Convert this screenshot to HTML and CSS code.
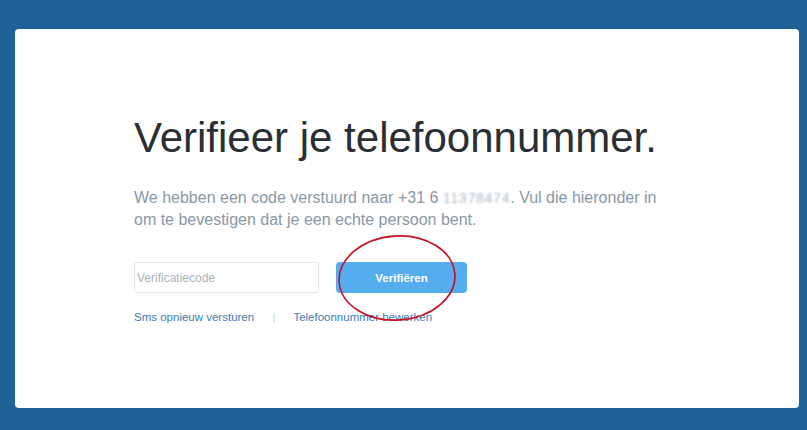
FILE: index.html
```html
<!DOCTYPE html>
<html lang="nl">
<head>
    <meta charset="UTF-8">
    <meta name="viewport" content="width=device-width, initial-scale=1.0">
    <title>Verifieer je telefoonnummer</title>
    <link rel="stylesheet" href="styles.css">
</head>
<body>

    <div class="card">
        <h1>Verifieer je telefoonnummer.</h1>

        <p class="intro">
            We hebben een code verstuurd naar +31 6 <span class="blurred">11378474</span>. Vul die hieronder in<br>
            om te bevestigen dat je een echte persoon bent.
        </p>

        <div class="form-row">
            <input type="text" class="code-input" placeholder="Verificatiecode">
            <div class="btn-wrap">
                <button class="verify-btn">Verifiëren</button>
                <svg class="circle-mark" width="124" height="92" viewBox="0 0 124 92">
                    <ellipse cx="62" cy="46" rx="58" ry="42" fill="none" stroke="#c8101e" stroke-width="1.6" transform="rotate(-4 62 46)"/>
                </svg>
            </div>
        </div>

        <div class="links">
            <a href="#">Sms opnieuw versturen</a>
            <span class="sep">|</span>
            <a href="#">Telefoonnummer bewerken</a>
        </div>
    </div>

</body>
</html>
```

FILE: styles.css
```css
body {
    margin: 0;
    background-color: #1f6298;
    font-family: "Liberation Sans", Arial, sans-serif;
    padding: 29px 8px 22px 15px;
}
.card {
    background: white;
    border-radius: 4px;
    height: 379px;
    box-sizing: border-box;
    padding: 83px 0 0 119px;
}
h1 {
    margin: 0;
    font-size: 42px;
    font-weight: normal;
    line-height: 52px;
    color: #292f33;
}
.intro {
    margin: 23px 0 0;
    font-size: 16px;
    line-height: 22px;
    color: #8899a6;
}
.blurred {
    color: #b4bcc3;
    filter: blur(1px);
    font-size: 14.5px;
    letter-spacing: 0.5px;
}
.form-row {
    display: flex;
    align-items: center;
    margin-top: 31px;
}
.code-input {
    width: 185px;
    height: 31px;
    box-sizing: border-box;
    border: 1px solid #e1e8ed;
    border-radius: 3px;
    padding: 0 2px;
    font-family: inherit;
    font-size: 12px;
    color: #292f33;
}
.code-input::placeholder {
    color: #a9b4bc;
}
.btn-wrap {
    position: relative;
    margin-left: 17px;
}
.verify-btn {
    width: 131px;
    height: 31px;
    border: none;
    border-radius: 4px;
    background-color: #55acee;
    color: white;
    font-family: inherit;
    font-weight: bold;
    font-size: 11.5px;
    cursor: pointer;
}
.circle-mark {
    position: absolute;
    left: -1px;
    top: -30px;
    pointer-events: none;
}
.links {
    margin-top: 18px;
    font-size: 11.5px;
}
.links a {
    color: #3b7bb5;
    text-decoration: none;
}
.sep {
    color: #ccd6dd;
    margin: 0 15px;
}
```
